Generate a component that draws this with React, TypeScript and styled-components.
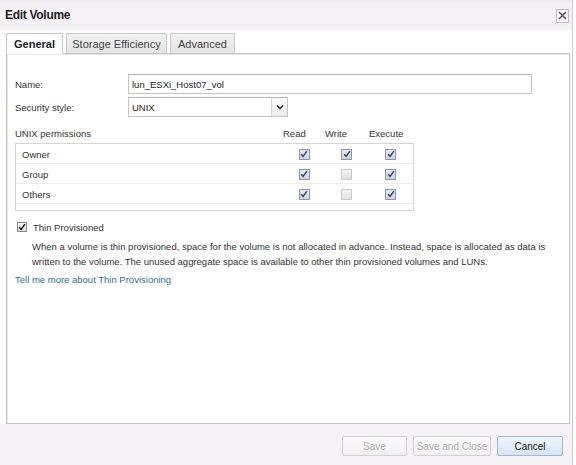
import React, { ReactElement } from 'react';
import styled, { createGlobalStyle } from 'styled-components';

const GlobalStyle = createGlobalStyle`
  html, body {
    margin: 0;
    padding: 0;
    background: #ffffff;
  }
  body {
    font-family: "Liberation Sans", Arial, sans-serif;
    color: #333333;
  }
`;

const Dialog = styled.div`
  display: flex;
  flex-direction: column;
  width: 573px;
  height: 465px;
  box-sizing: border-box;
  border-right: 1px solid #cfcbcf;
  background: #ffffff;
`;

const TitleBar = styled.div`
  display: flex;
  align-items: center;
  justify-content: space-between;
  height: 30px;
  flex: none;
  padding: 0 3px 0 5px;
  box-sizing: border-box;
  background: linear-gradient(#ece9ec 0, #f5f2f5 3px, #f5f2f5 100%);
`;

const Title = styled.div`
  font-size: 12px;
  font-weight: bold;
  color: #222222;
  letter-spacing: -0.3px;
`;

const CloseButton = styled.div`
  display: flex;
  align-items: center;
  justify-content: center;
  width: 11px;
  height: 12px;
  border: 1px solid #bdbdbd;
  background: #f8f8f8;
  margin-top: 1px;
`;

const TabStrip = styled.div`
  display: flex;
  align-items: flex-end;
  gap: 3px;
  height: 23px;
  flex: none;
  padding-left: 6px;
  box-sizing: border-box;
`;

const Tab = styled.div<{ $active?: boolean; $width: number }>`
  display: flex;
  align-items: center;
  justify-content: center;
  width: ${p => p.$width}px;
  height: ${p => (p.$active ? 21 : 20)}px;
  box-sizing: border-box;
  border: 1px solid #c8c8c8;
  border-bottom: ${p => (p.$active ? '1px solid #ffffff' : 'none')};
  margin-bottom: ${p => (p.$active ? -1 : 0)}px;
  background: ${p => (p.$active ? '#ffffff' : 'linear-gradient(#f2f2f2, #e4e4e4)')};
  font-size: 11px;
  font-weight: ${p => (p.$active ? 'bold' : 'normal')};
  color: ${p => (p.$active ? '#222222' : '#444444')};
  position: relative;
  z-index: 1;
`;

const Panel = styled.div`
  flex: 1;
  margin: 0 2px 0 6px;
  padding: 20px 8px 0 8px;
  border: 1px solid #c6c6c6;
  box-shadow: inset 1px 1px 0 #e6e6e6;
  font-size: 9.5px;
`;

const FieldRow = styled.div`
  display: grid;
  grid-template-columns: 113px auto;
  align-items: center;
  height: 20px;
  margin-bottom: 3px;
`;

const FieldLabel = styled.div`
  color: #333333;
`;

const TextInput = styled.div`
  width: 404px;
  height: 20px;
  box-sizing: border-box;
  border: 1px solid #c4c4c4;
  border-top-color: #b4b4b4;
  padding: 0 3px;
  display: flex;
  align-items: center;
  color: #222222;
`;

const Select = styled.div`
  display: flex;
  width: 160px;
  height: 20px;
  box-sizing: border-box;
  border: 1px solid #c4c4c4;
  border-top-color: #b4b4b4;
`;

const SelectValue = styled.div`
  flex: 1;
  display: flex;
  align-items: center;
  padding-left: 3px;
  color: #222222;
`;

const SelectArrow = styled.div`
  width: 15px;
  display: flex;
  align-items: center;
  justify-content: center;
  border-left: 1px solid #d4d4d4;
  background: linear-gradient(#fafafa, #ececec);
`;

const PermColumns = `
  display: grid;
  grid-template-columns: 268px 42px 43px 46px;
  align-items: center;
`;

const PermHeader = styled.div`
  ${PermColumns}
  margin-top: 9px;
  height: 14px;
  margin-bottom: 3px;
  color: #333333;
`;

const HeaderCell = styled.div<{ $offset?: number }>`
  padding-left: ${p => p.$offset ?? 0}px;
`;

const PermTable = styled.div`
  width: 399px;
  box-sizing: border-box;
  border: 1px solid #d6d6d6;
  padding-bottom: 6px;
`;

const PermRow = styled.div`
  ${PermColumns}
  grid-template-columns: 267px 42px 43px 45px;
  height: 18px;
  padding-top: 1px;
  border-bottom: 1px solid #ececec;
`;

const RowLabel = styled.div`
  padding-left: 6px;
  color: #333333;
`;

const CheckCell = styled.div`
  display: flex;
  justify-content: center;
`;

const GridCheck = styled.span<{ $checked: boolean }>`
  display: flex;
  align-items: center;
  justify-content: center;
  width: 11px;
  height: 11px;
  box-sizing: border-box;
  border: 1px solid ${p => (p.$checked ? '#8f98aa' : '#c9c9c9')};
  background: ${p => (p.$checked ? 'linear-gradient(#e4e7ef, #cfd4e0)' : 'linear-gradient(#f4f4f4, #e2e2e2)')};
`;

const CheckRow = styled.div`
  display: flex;
  align-items: center;
  gap: 6px;
  height: 14px;
  margin-top: 9px;
  padding-left: 2px;
  color: #333333;
`;

const NativeCheck = styled.span`
  display: flex;
  align-items: center;
  justify-content: center;
  width: 10px;
  height: 10px;
  box-sizing: border-box;
  border: 1px solid #8e8e8e;
  background: linear-gradient(#f6f6f6, #dcdcdc);
`;

const Description = styled.p`
  margin: 5px 0 0 0;
  padding-left: 17px;
  line-height: 15px;
  color: #333333;
`;

const HelpLink = styled.a`
  display: block;
  margin-top: 4px;
  line-height: 14px;
  color: #2c6f93;
  text-decoration: none;
`;

const Footer = styled.div`
  display: flex;
  justify-content: flex-end;
  align-items: flex-start;
  gap: 6px;
  height: 41px;
  flex: none;
  padding: 12px 9px 0 0;
  box-sizing: border-box;
  background: #f5f2f5;
`;

const Button = styled.div<{ $width: number; $primary?: boolean }>`
  display: flex;
  align-items: center;
  justify-content: center;
  width: ${p => p.$width}px;
  height: 20px;
  box-sizing: border-box;
  font-size: 10px;
  border: 1px solid ${p => (p.$primary ? '#9fb7cf' : '#d2d2d2')};
  border-radius: 2px;
  background: ${p => (p.$primary ? 'linear-gradient(#eef5fc, #d5e5f4)' : 'linear-gradient(#fbfbfb, #f0f0f0)')};
  color: ${p => (p.$primary ? '#222222' : '#b0b0b0')};
`;

function Tick({ color }: { color: string }): ReactElement {
  return (
    <svg width="8" height="8" viewBox="0 0 8 8">
      <path d="M1.2 4.2 L3.1 6.4 L6.9 1.2" fill="none" stroke={color} strokeWidth="1.4" />
    </svg>
  );
}

const permissions = [
  { name: 'Owner', read: true, write: true, execute: true },
  { name: 'Group', read: true, write: false, execute: true },
  { name: 'Others', read: true, write: false, execute: true },
];

export default function App(): ReactElement {
  return (
    <>
      <GlobalStyle />
      <Dialog>
        <TitleBar>
          <Title>Edit Volume</Title>
          <CloseButton>
            <svg width="9" height="9" viewBox="0 0 9 9">
              <path d="M1 1 L8 8 M8 1 L1 8" stroke="#555" strokeWidth="1.5" />
            </svg>
          </CloseButton>
        </TitleBar>

        <TabStrip>
          <Tab $active $width={57}>General</Tab>
          <Tab $width={101}>Storage Efficiency</Tab>
          <Tab $width={65}>Advanced</Tab>
        </TabStrip>

        <Panel>
          <FieldRow>
            <FieldLabel>Name:</FieldLabel>
            <TextInput>lun_ESXi_Host07_vol</TextInput>
          </FieldRow>
          <FieldRow>
            <FieldLabel>Security style:</FieldLabel>
            <Select>
              <SelectValue>UNIX</SelectValue>
              <SelectArrow>
                <svg width="8" height="6" viewBox="0 0 8 6">
                  <path d="M1 1.5 L4 4.5 L7 1.5" fill="none" stroke="#333" strokeWidth="1.6" />
                </svg>
              </SelectArrow>
            </Select>
          </FieldRow>

          <PermHeader>
            <HeaderCell>UNIX permissions</HeaderCell>
            <HeaderCell>Read</HeaderCell>
            <HeaderCell>Write</HeaderCell>
            <HeaderCell $offset={1}>Execute</HeaderCell>
          </PermHeader>
          <PermTable>
            {permissions.map(p => (
              <PermRow key={p.name}>
                <RowLabel>{p.name}</RowLabel>
                {[p.read, p.write, p.execute].map((v, i) => (
                  <CheckCell key={i}>
                    <GridCheck $checked={v}>{v && <Tick color="#2d3f78" />}</GridCheck>
                  </CheckCell>
                ))}
              </PermRow>
            ))}
          </PermTable>

          <CheckRow>
            <NativeCheck><Tick color="#111" /></NativeCheck>
            Thin Provisioned
          </CheckRow>
          <Description>
            When a volume is thin provisioned, space for the volume is not allocated in advance. Instead, space is allocated as data is
            written to the volume. The unused aggregate space is available to other thin provisioned volumes and LUNs.
          </Description>
          <HelpLink href="#">Tell me more about Thin Provisioning</HelpLink>
        </Panel>

        <Footer>
          <Button $width={65}>Save</Button>
          <Button $width={78}>Save and Close</Button>
          <Button $width={66} $primary>Cancel</Button>
        </Footer>
      </Dialog>
    </>
  );
}
